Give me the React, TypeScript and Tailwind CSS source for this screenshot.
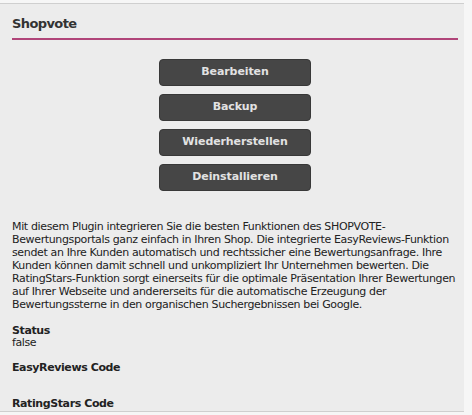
import React from "react";

const buttons = ["Bearbeiten", "Backup", "Wiederherstellen", "Deinstallieren"];

const lines = [
  "Mit diesem Plugin integrieren Sie die besten Funktionen des SHOPVOTE-",
  "Bewertungsportals ganz einfach in Ihren Shop. Die integrierte EasyReviews-Funktion",
  "sendet an Ihre Kunden automatisch und rechtssicher eine Bewertungsanfrage. Ihre",
  "Kunden können damit schnell und unkompliziert Ihr Unternehmen bewerten. Die",
  "RatingStars-Funktion sorgt einerseits für die optimale Präsentation Ihrer Bewertungen",
  "auf Ihrer Webseite und andererseits für die automatische Erzeugung der",
  "Bewertungssterne in den organischen Suchergebnissen bei Google.",
];

export default function App() {
  return (
    <div className="w-[472px] h-[415px] bg-[#f6f6f6] pt-[3px]" style={{ fontFamily: '"DejaVu Sans", Verdana, sans-serif' }}>
      <div className="w-[464px] h-[409px] bg-[#ececec] border-t border-b border-[#cfcfcf] pl-3 pr-[6px]">
        <div className="pt-[12px] pb-[6px] border-b-2 border-[#b04579]">
          <h1 className="text-[13px] leading-[16px] font-bold text-[#333] tracking-[-0.6px]">Shopvote</h1>
        </div>
        <div className="flex flex-col items-center gap-2 mt-[19px]">
          {buttons.map((b) => (
            <button
              key={b}
              className="w-[152px] h-[27px] rounded-[4px] bg-[#464646] border border-[#383838] text-[#e2e2e2] text-[11px] font-bold tracking-[-0.1px]"
            >
              {b}
            </button>
          ))}
        </div>
        <p className="mt-[29px] text-[11px] leading-[13px] text-[#222] tracking-[-0.36px] whitespace-nowrap">
          {lines.map((l, i) => (
            <React.Fragment key={i}>
              {l}
              {i < lines.length - 1 && <br />}
            </React.Fragment>
          ))}
        </p>
        <div className="mt-[13px] text-[11px] leading-[13px] text-[#222] tracking-[-0.4px]">
          <div className="font-bold">Status</div>
          <div className="-mt-[1px]">false</div>
          <div className="font-bold mt-[12px]">EasyReviews Code</div>
          <div className="font-bold mt-[23px]">RatingStars Code</div>
        </div>
      </div>
    </div>
  );
}
